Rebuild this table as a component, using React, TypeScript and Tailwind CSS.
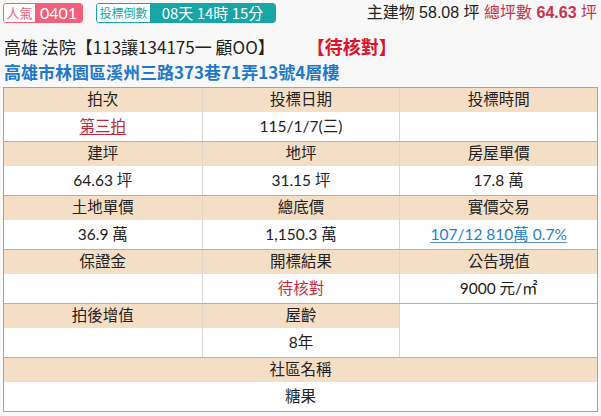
import React from "react";

const cjk = { fontFamily: '"Noto Sans CJK TC", "Noto Sans", sans-serif' };
const cell = { fontFamily: 'Lato, "Noto Sans CJK TC", sans-serif' };
const arial = { fontFamily: '"Liberation Sans", "Noto Sans CJK TC", sans-serif' };

type Item = { label: string; value?: React.ReactNode };

const groups: Item[][] = [
  [
    { label: "拍次", value: <span className="text-[#c0283a] underline underline-offset-2">第三拍</span> },
    { label: "投標日期", value: "115/1/7(三)" },
    { label: "投標時間", value: "" },
  ],
  [
    { label: "建坪", value: "64.63 坪" },
    { label: "地坪", value: "31.15 坪" },
    { label: "房屋單價", value: "17.8 萬" },
  ],
  [
    { label: "土地單價", value: "36.9 萬" },
    { label: "總底價", value: "1,150.3 萬" },
    {
      label: "實價交易",
      value: <span className="text-[#2a7dc9] underline underline-offset-2 decoration-[#5a8fc0]">107/12 810萬 0.7%</span>,
    },
  ],
  [
    { label: "保證金", value: "" },
    { label: "開標結果", value: <span className="text-[#d42a3c]">待核對</span> },
    { label: "公告現值", value: <span>9000 元/㎡</span> },
  ],
];

const Group = ({ items }: { items: Item[] }) => (
  <div className="grid grid-cols-3 border-b border-[#b9b0a4]">
    {items.map((it, i) => (
      <div key={i} className={i > 0 ? "border-l border-[#ddd6cc]" : ""}>
        <div className="h-[24px] bg-[#f4dfc6] flex items-center justify-center text-[15.5px] text-[#222]">
          {it.label}
        </div>
        <div className="h-[29px] bg-white flex items-center justify-center text-[15.5px] text-[#222]">
          {it.value}
        </div>
      </div>
    ))}
  </div>
);

export default function App() {
  return (
    <div className="w-[601px] h-[416px] bg-[#f8f8f8] overflow-hidden" style={cjk}>
      <div className="flex items-center h-[25px] pl-[3px] pr-[4px] pt-[1px]">
        <div className="flex h-[20px] rounded-[3px] overflow-hidden border border-[#f0607a]">
          <span className="w-[31px] bg-white text-[#f0607a] text-[13px] flex items-center justify-center">人氣</span>
          <span className="w-[47px] bg-[#f0607a] text-white text-[16px] flex items-center justify-center" style={cell}>0401</span>
        </div>
        <div className="ml-[13px] flex h-[20px] rounded-[3px] overflow-hidden border border-[#18a5a5]">
          <span className="w-[53px] bg-white text-[#18a5a5] text-[12px] flex items-center justify-center">投標倒數</span>
          <span className="w-[125px] bg-[#18a5a5] text-white text-[15px] flex items-center justify-center whitespace-nowrap">08天 14時 15分</span>
        </div>
        <div className="ml-auto text-[16px] text-[#222] whitespace-nowrap" style={arial}>
          主建物 58.08 坪 <span className="text-[#c8324f]">總坪數 <b>64.63</b> 坪</span>
        </div>
      </div>
      <div className="pl-[4px] mt-[9px] h-[25px] flex items-center text-[17px] text-[#222] whitespace-nowrap">
        高雄 法院【113讓134175一 顧OO】
        <span className="ml-[32px] text-[18px] text-[#e0102a] font-bold">【待核對】</span>
      </div>
      <div className="pl-[4px] h-[25px] flex items-center text-[17px] font-bold text-[#1f78cc] whitespace-nowrap">
        高雄市林園區溪州三路373巷71弄13號4層樓
      </div>
      <div className="ml-[3px] mt-[3px] w-[595px] border border-[#a8a29a] border-b-0" style={cell}>
        {groups.map((g, i) => (
          <Group key={i} items={g} />
        ))}
        <div className="grid grid-cols-3 border-b border-[#b9b0a4]">
          <div>
            <div className="h-[24px] bg-[#f4dfc6] flex items-center justify-center text-[15.5px] text-[#222]">拍後增值</div>
            <div className="h-[29px] bg-white" />
          </div>
          <div className="border-l border-[#ddd6cc]">
            <div className="h-[24px] bg-[#f4dfc6] flex items-center justify-center text-[15.5px] text-[#222]">屋齡</div>
            <div className="h-[29px] bg-white flex items-center justify-center text-[15.5px] text-[#222]">8年</div>
          </div>
          <div className="border-l border-[#ddd6cc] bg-white" />
        </div>
        <div className="border-b border-[#a8a29a]">
          <div className="h-[24px] bg-[#f4dfc6] flex items-center justify-center text-[15.5px] text-[#222]">社區名稱</div>
          <div className="h-[29px] bg-white flex items-center justify-center text-[15.5px] text-[#222]">糖果</div>
        </div>
      </div>
    </div>
  );
}
